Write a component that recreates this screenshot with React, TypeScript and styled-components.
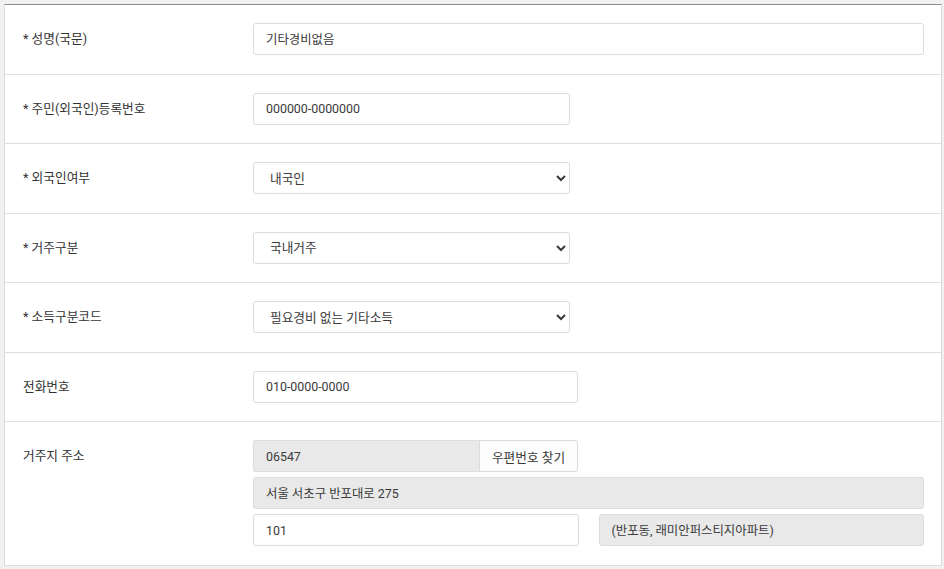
import React from 'react'
import styled, { createGlobalStyle } from 'styled-components'

const GlobalStyle = createGlobalStyle`
  html, body {
    margin: 0;
    padding: 0;
    background: #f1f1f1;
  }
  body {
    font-family: Roboto, "Noto Sans CJK KR", sans-serif;
    font-size: 13px;
    color: #333;
  }
`

const Form = styled.div`
  margin: 4px 0 0 4px;
  width: 936px;
  background: #fff;
  border-top: 1px solid #8c8c8c;
  border-left: 1px solid #dcdcdc;
  border-right: 1px solid #dcdcdc;
`

const Row = styled.div`
  display: grid;
  grid-template-columns: 248px 1fr;
  padding: 18px 17px 18.5px 0;
  border-bottom: 1px solid #dedede;
`

const Label = styled.div`
  padding-left: 18px;
  line-height: 32px;
  font-size: 12.7px;
  color: #333;
  white-space: nowrap;
`

const Field = styled.div<{ $width?: number }>`
  display: flex;
  flex-direction: column;
  gap: 5px;
  width: ${({ $width }) => ($width ? `${$width}px` : '100%')};
`

const TextInput = styled.input<{ $readOnly?: boolean }>`
  box-sizing: border-box;
  height: 32px;
  width: 100%;
  padding: 0 12px;
  border: 1px solid #dcdcdc;
  border-radius: 3px;
  background: ${({ $readOnly }) => ($readOnly ? '#e9e9e9' : '#fff')};
  font: inherit;
  font-size: 12.4px;
  color: #3a3a3a;
  outline: none;
`

const Select = styled.select`
  box-sizing: border-box;
  height: 32px;
  width: 100%;
  padding: 0 8px 0 12px;
  border: 1px solid #dcdcdc;
  border-radius: 3px;
  background: #fff;
  font: inherit;
  font-size: 12.7px;
  color: #3a3a3a;
  outline: none;
`

const Pair = styled.div`
  display: grid;
  grid-template-columns: 1fr 1fr;
  column-gap: 20px;
`

const ZipGroup = styled.div`
  display: flex;
`

const ZipInput = styled(TextInput)`
  width: 226px;
  border-radius: 3px 0 0 3px;
  border-right: none;
`

const ZipButton = styled.button`
  box-sizing: border-box;
  height: 32px;
  width: 99px;
  border: 1px solid #dcdcdc;
  border-radius: 0 3px 3px 0;
  background: #fdfdfd;
  font: inherit;
  font-size: 12.7px;
  color: #3a3a3a;
  cursor: pointer;
`

export default function App() {
  return (
    <>
      <GlobalStyle />
      <Form>
        <Row>
          <Label>* 성명(국문)</Label>
          <Field>
            <TextInput defaultValue="기타경비없음" />
          </Field>
        </Row>
        <Row>
          <Label>* 주민(외국인)등록번호</Label>
          <Field $width={317}>
            <TextInput defaultValue="000000-0000000" />
          </Field>
        </Row>
        <Row>
          <Label>* 외국인여부</Label>
          <Field $width={317}>
            <Select defaultValue="내국인">
              <option>내국인</option>
              <option>외국인</option>
            </Select>
          </Field>
        </Row>
        <Row>
          <Label>* 거주구분</Label>
          <Field $width={317}>
            <Select defaultValue="국내거주">
              <option>국내거주</option>
              <option>국외거주</option>
            </Select>
          </Field>
        </Row>
        <Row>
          <Label>* 소득구분코드</Label>
          <Field $width={317}>
            <Select defaultValue="필요경비 없는 기타소득">
              <option>필요경비 없는 기타소득</option>
            </Select>
          </Field>
        </Row>
        <Row>
          <Label>전화번호</Label>
          <Field $width={325}>
            <TextInput defaultValue="010-0000-0000" />
          </Field>
        </Row>
        <Row>
          <Label>거주지 주소</Label>
          <Field>
            <ZipGroup>
              <ZipInput $readOnly readOnly defaultValue="06547" />
              <ZipButton type="button">우편번호 찾기</ZipButton>
            </ZipGroup>
            <TextInput $readOnly readOnly defaultValue="서울 서초구 반포대로 275" />
            <Pair>
              <TextInput defaultValue="101" />
              <TextInput $readOnly readOnly defaultValue="(반포동, 래미안퍼스티지아파트)" />
            </Pair>
          </Field>
        </Row>
      </Form>
    </>
  )
}
